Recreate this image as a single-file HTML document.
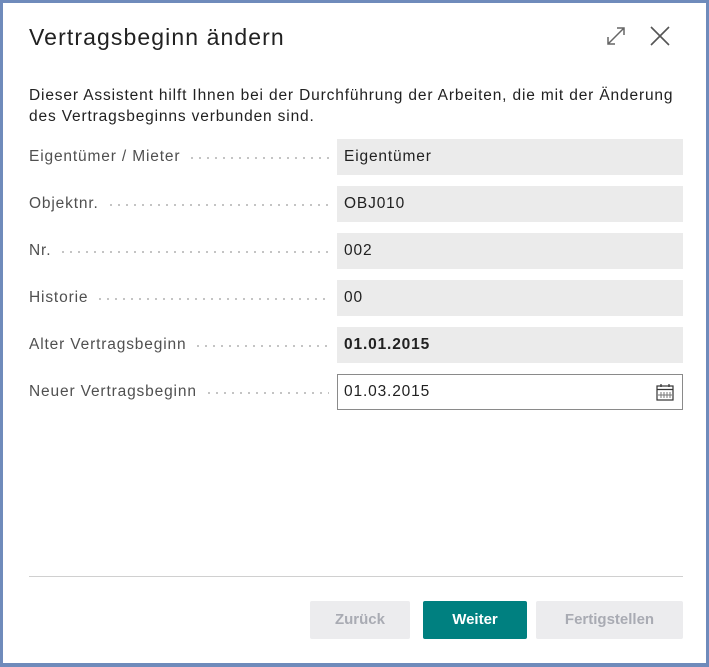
<!DOCTYPE html>
<html><head><meta charset="utf-8"><style>
html,body{margin:0;padding:0;}
body{width:709px;height:666px;position:relative;background:#fff;font-family:"Liberation Sans",sans-serif;overflow:hidden;}
.frame{position:absolute;left:0;top:0;width:703px;height:660px;border:3px solid #6f8bbb;border-bottom-width:4px;box-sizing:content-box;}
.title{position:absolute;left:29px;top:24px;font-size:23px;letter-spacing:1.1px;color:#212121;}
.desc{position:absolute;left:29px;top:85px;width:665px;font-size:15.5px;letter-spacing:0.85px;line-height:21px;color:#212121;}
.row{position:absolute;left:29px;width:654px;height:36px;}
.lab{position:absolute;left:0;top:0;height:36px;line-height:36px;font-size:15.5px;letter-spacing:0.85px;color:#505050;width:300px;display:flex;align-items:center;}
.lab span{white-space:nowrap;padding-right:8px;}
.lab i{flex:1;height:2px;background-image:radial-gradient(circle,#b5b5b5 0.9px,transparent 1.1px);background-size:8px 2px;margin-top:2px;}
.val{position:absolute;left:308px;top:0;width:346px;height:36px;background:#ebebeb;box-sizing:border-box;padding-left:7px;line-height:36px;font-size:15.5px;letter-spacing:0.85px;color:#212121;}
.inp{background:#fff;border:1px solid #8a8a8a;line-height:34px;padding-left:6px;}
.sep{position:absolute;left:29px;top:576px;width:654px;height:1px;background:#d0d0d0;}
.btn{position:absolute;top:601px;height:38px;line-height:38px;text-align:center;font-size:15px;font-weight:bold;border-radius:2px;}
.dis{background:#ececee;color:#a9abb3;}
</style></head><body>
<div class="frame"></div>
<div class="title">Vertragsbeginn ändern</div>
<svg style="position:absolute;left:605px;top:26px" width="22" height="20" viewBox="0 0 22 20"><g stroke="#666" stroke-width="1.5" fill="none"><path d="M3 18L19 2M12 2h7v7M3 11v7h7"/></g></svg>
<svg style="position:absolute;left:650px;top:26px" width="20" height="20" viewBox="0 0 20 20"><g stroke="#555" stroke-width="1.6"><path d="M1 1L19 19M19 1L1 19"/></g></svg>
<div class="desc">Dieser Assistent hilft Ihnen bei der Durchführung der Arbeiten, die mit der Änderung des Vertragsbeginns verbunden sind.</div>
<div class="row" style="top:139px"><div class="lab"><span>Eigentümer / Mieter</span><i></i></div><div class="val">Eigentümer</div></div>
<div class="row" style="top:186px"><div class="lab"><span>Objektnr.</span><i></i></div><div class="val">OBJ010</div></div>
<div class="row" style="top:233px"><div class="lab"><span>Nr.</span><i></i></div><div class="val">002</div></div>
<div class="row" style="top:280px"><div class="lab"><span>Historie</span><i></i></div><div class="val">00</div></div>
<div class="row" style="top:327px"><div class="lab"><span>Alter Vertragsbeginn</span><i></i></div><div class="val" style="font-weight:bold">01.01.2015</div></div>
<div class="row" style="top:374px"><div class="lab"><span>Neuer Vertragsbeginn</span><i></i></div><div class="val inp">01.03.2015
<svg style="position:absolute;right:8px;top:8px" width="18" height="18" viewBox="0 0 18 18"><g fill="none" stroke="#333" stroke-width="1.2"><rect x="1" y="3" width="16" height="14"/><path d="M1 6.5h16M5 1v3M13 1v3"/></g><g stroke="#777" stroke-width="1"><path d="M5 9v6M8 9v6M11 9v6M14 9v6M2 12h14"/></g></svg></div></div>
<div class="sep"></div>
<div class="btn dis" style="left:310px;width:100px">Zurück</div>
<div class="btn" style="left:423px;width:104px;background:#008080;color:#fff">Weiter</div>
<div class="btn dis" style="left:536px;width:147px">Fertigstellen</div>
</body></html>
